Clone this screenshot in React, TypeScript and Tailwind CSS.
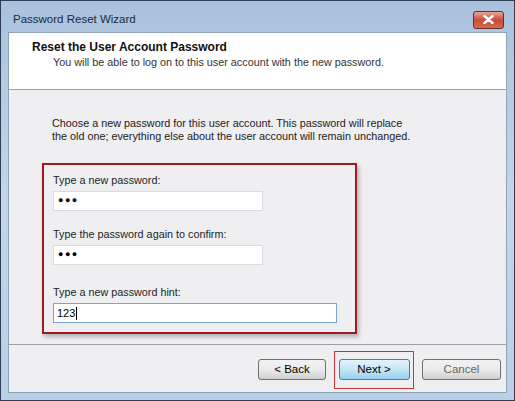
import React from "react";

function Field({ label, value, wide, focused, caret }: { label: string; value: string; wide?: boolean; focused?: boolean; caret?: boolean }) {
  return (
    <div className="flex flex-col">
      <div className="h-[14px] leading-[14px] text-[#1e1e1e]">{label}</div>
      <div
        className={`mt-[4px] flex h-[20px] items-center border bg-white pl-[3px] ${
          wide ? "w-[284px]" : "w-[210px]"
        } ${focused ? "border-[#7ea4c9]" : "border-[#d7dbe0]"}`}
      >
        {caret ? (
          <span className="text-[11px] text-black">
            {value}
            <span className="ml-[1px] inline-block h-[13px] w-[1px] translate-y-[3px] bg-black" />
          </span>
        ) : (
          <span className="pl-[1px] text-[9px] tracking-[1.5px] text-black">{value}</span>
        )}
      </div>
    </div>
  );
}

function Button({ label, primary, dim }: { label: string; primary?: boolean; dim?: boolean }) {
  return (
    <div
      className={`flex h-[21px] items-center justify-center rounded-[3px] border text-[11.5px] ${
        primary
          ? "w-[71px] border-[#3c7fb1] bg-gradient-to-b from-[#e5f4fc] via-[#c4e5f6] to-[#98d1ef] text-black"
          : "border-[#707070] bg-gradient-to-b from-[#f2f2f2] via-[#ebebeb] to-[#d0d0d0]"
      } ${dim ? "w-[79px] text-[#666]" : primary ? "" : "w-[68px] text-black"}`}
    >
      {label}
    </div>
  );
}

export default function App() {
  return (
    <div
      className="flex h-[401px] w-[515px] flex-col border border-[#2c3e55] bg-gradient-to-b from-[#a9c2dc] via-[#c3d6ea] to-[#b9d0e8] text-[10.8px]"
      style={{ fontFamily: '"Liberation Sans", Arial, sans-serif' }}
    >
      {/* title bar */}
      <div className="flex h-[31px] shrink-0 items-center justify-between pl-[12px] pr-[10px]">
        <span className="pt-[6px] text-[11.5px] text-[#1c2a3a]">Password Reset Wizard</span>
        <div className="mt-[6px] flex h-[18px] w-[31px] items-center justify-center rounded-[3px] border border-[#6b2c26] bg-gradient-to-b from-[#e8a497] via-[#c94b36] to-[#d46a52]">
          <svg width="11" height="9" viewBox="0 0 11 9">
            <path d="M1.5 1 L9.5 8 M9.5 1 L1.5 8" stroke="#ffffff" strokeWidth="2.4" strokeLinecap="round" />
          </svg>
        </div>
      </div>

      {/* client */}
      <div className="mx-[7px] mb-[7px] flex flex-1 flex-col border border-[#8fa3b8] bg-[#efeef1]">
        {/* header */}
        <div className="flex h-[57px] shrink-0 flex-col border-b border-[#a0a0a0] bg-white pl-[23px] pt-[7px]">
          <div className="text-[12px] font-bold leading-[14px] text-[#111]">Reset the User Account Password</div>
          <div className="pl-[21px] pt-[1px] leading-[14px] text-[#333]">
            You will be able to log on to this user account with the new password.
          </div>
        </div>

        {/* body */}
        <div className="flex flex-1 flex-col pl-[43px] pt-[27px]">
          <div className="leading-[13px] text-[#222]">
            Choose a new password for this user account. This password will replace
            <br />
            the old one; everything else about the user account will remain unchanged.
          </div>

          <div className="mt-[20px] ml-[-10px] flex w-[315px] flex-col gap-[16px] border-2 border-[#9e1b24] pb-[9px] pl-[9px] pt-[8px] shadow-[2px_3px_4px_rgba(0,0,0,0.25)]">
            <Field label="Type a new password:" value="●●●" />
            <Field label="Type the password again to confirm:" value="●●●" />
            <div className="mt-[4px]">
              <Field label="Type a new password hint:" value="123" wide focused caret />
            </div>
          </div>
        </div>

        {/* footer */}
        <div className="flex h-[48px] shrink-0 items-center justify-end gap-[8px] border-t border-[#a0a0a0] pr-[5px] pt-[2px]">
          <Button label="< Back" />
          <div className="flex h-[38px] w-[80px] items-center justify-center border border-[#c4343d]">
            <Button label="Next >" primary />
          </div>
          <Button label="Cancel" dim />
        </div>
      </div>
    </div>
  );
}
